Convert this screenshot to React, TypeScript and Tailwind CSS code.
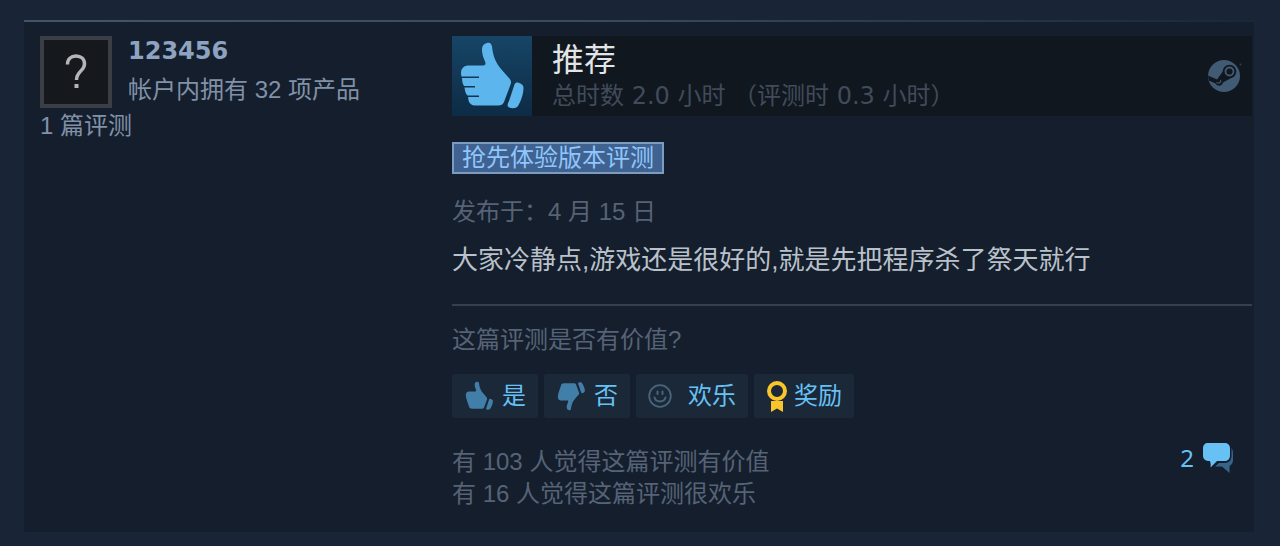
const sans = "font-['Liberation_Sans','Noto_Sans_CJK_SC',sans-serif]";
const wide = "font-['DejaVu_Sans','Noto_Sans_CJK_SC',sans-serif]";
const noto = "font-['Noto_Sans','Noto_Sans_CJK_SC',sans-serif]";

const Thumb = ({ className }: any) => (
  <svg viewBox="6 5 66 70" className={className} fill="currentColor" aria-hidden="true">
    <path d="M34 7C36.5 6 38.5 7.500 39 10.500C39.800 17 41 22.500 45 29C49 35 54 39 57.500 44C58.500 46 58 48 57 50L51 66C50 68.500 48 69.500 45 69.500H23C18.500 69.500 16 67.500 15.500 64L15 61H26V59.500H14.500C12.500 58 11.800 54 11.500 51.500H22V50H11C9.500 48 9.200 45 9 42H26V40.500H8.500C7 35 9 30 15 29.500H30C32.500 29.500 33 28 32 25.500C30 21 28.800 17 29 13C29.200 9.500 31 8 34 7Z" />
    <path d="M63.500 46.500C66 46 70.500 48.500 70.500 51.500C70.500 58 68 65 65 70C63 73 56.500 72.500 55 70.500C54 69.500 55 67 56 65L61 50C61.500 48 62 47 63.500 46.500Z" />
  </svg>
);

// no finger lines at this size
const SmallThumb = ({ className }: any) => (
  <svg viewBox="6 5 66 70" className={className} fill="currentColor" aria-hidden="true">
    <path d="M34 7C36.5 6 38.5 7.500 39 10.500C39.800 17 41 22.500 45 29C49 35 54 39 57.500 44C58.500 46 58 48 57 50L51 66C50 68.500 48 69.500 45 69.500H23C18.500 69.500 16 67.500 15.500 64L12 54L9 44C7 35 9 30 15 29.500H30C32.500 29.500 33 28 32 25.500C30 21 28.800 17 29 13C29.200 9.500 31 8 34 7Z" />
    <path d="M64.500 46.500C66 46 71.500 48.500 71.500 51.500C71.500 58 68 65 65 70C63 73 56.500 72.500 56 70.500C55 69.500 56 67 57 65L62 50C62.500 48 63 47 64.500 46.500Z" />
  </svg>
);

const Steam = () => (
  <svg viewBox="0 0 34 32" className="w-[34px] h-8 mr-[10px]" aria-label="Steam">
    <circle cx="16" cy="16" r="16" fill="#405b73" />
    <path d="M0 15.500L9 19.500L15.500 10.500L24 17.500L15 22.500C14.500 26 9.500 27 7.500 23.500L0.800 20.500Z" fill="#10171f" />
    <circle cx="21.500" cy="11.500" r="6.800" fill="#10171f" />
    <circle cx="21.500" cy="11.500" r="4" fill="none" stroke="#405b73" strokeWidth="1.800" />
    <path d="M8.500 22.500C10.500 24 13.500 22.500 12.500 20" fill="none" stroke="#405b73" strokeWidth="1.200" />
    <circle cx="32.500" cy="4.500" r="1" fill="#2c3e50" />
  </svg>
);

const Smile = () => (
  <svg viewBox="0 0 24 24" className="w-6 h-6 text-[#48647b]" fill="none" stroke="currentColor" strokeWidth="2" strokeLinecap="round" aria-hidden="true">
    <circle cx="12" cy="12" r="10.800" strokeWidth="1.800" />
    <path d="M6.500 13.500C8 18.700 16 18.700 17.500 13.500M9.500 7.500V10M14.500 7.500V10" />
  </svg>
);

const Award = () => (
  <svg viewBox="0 0 22 32" className="w-[22px] h-8 text-[#f9c42c]" fill="currentColor" aria-hidden="true">
    <path d="M5 21H17V32L11 28.500L5 32Z" />
    <circle cx="11" cy="11" r="8" fill="none" stroke="currentColor" strokeWidth="4" />
  </svg>
);

const Comments = () => (
  <svg viewBox="0 0 32 32" className="w-8 h-8" aria-hidden="true">
    <path d="M29.500 6C30.500 7 31 9 31 12V18C31 21 29.500 23 27.500 24V31L20 24.500H13L17 21H23C27 21 29.500 18 29.500 14Z" fill="#37648b" />
    <path d="M6 1H22C26 1 28 3 28 6.500V13C28 17 26 19 22 19H15L8.500 25.500C9 23 8.500 21 8 19C3 19 1 17 1 13V6.500C1 3 3 1 6 1Z" fill="#67c1f5" />
  </svg>
);

const voteButton = "flex items-center h-11 rounded-[2px] bg-[#1b2838] text-2xl text-[#67c1f5] cursor-pointer hover:bg-[#2b4660]";

const Author = () => (
  <aside className={`${sans} w-[412px] shrink-0 text-2xl text-[#8091a8]`}>
    <div className="flex gap-4">
      <div className="flex items-center justify-center size-[72px] border-4 border-[#3b3f45] bg-[#15181d]">
        <svg viewBox="0 0 22 36" className="w-[22px] h-9" fill="none" stroke="#b5b5b8" strokeWidth="3.500" aria-label="头像">
          <path d="M2.500 10.500C2.500 5 6 2 11 2C16 2 19.500 5 19.500 10C19.500 17 11.500 17 11.500 26" strokeLinejoin="round" />
          <path d="M9.500 32H13.500" strokeWidth="4" />
        </svg>
      </div>
      <div className="flex flex-col gap-2">
        <a href="#profile" className={`${wide} font-bold leading-[30px] text-[#8ea3c2]`}>123456</a>
        <a href="#games" className="leading-8">帐户内拥有 32 项产品</a>
      </div>
    </div>
    <a href="#reviews" className="block leading-9">1 篇评测</a>
  </aside>
);

const Header = () => (
  <header className="flex items-center h-20 bg-[#10171f]">
    <div className="flex items-center justify-center size-20 bg-linear-to-b from-[#174566] to-[#0d2b45]">
      <Thumb className="w-[66px] h-[70px] text-[#5db5ee]" />
    </div>
    <div className="flex-1 pl-5">
      <h1 className="text-[32px] leading-10 text-[#e2e4e6]">推荐</h1>
      <p className={`${wide} text-2xl leading-8 text-[#414b5a]`}>总时数 2.0 小时 （评测时 0.3 小时）</p>
    </div>
    <Steam />
  </header>
);

const Votes = () => (
  <div className="flex gap-[6px] mt-[18px]">
    <button type="button" className={`${voteButton} gap-2 px-3`}>
      <SmallThumb className="w-[30px] h-[30px] text-[#417fa9]" />
      <span>是</span>
    </button>
    <button type="button" className={`${voteButton} gap-2 px-3`}>
      <SmallThumb className="w-[30px] h-[30px] -scale-y-100 text-[#417fa9]" />
      <span>否</span>
    </button>
    <button type="button" className={`${voteButton} gap-4 px-3`}>
      <Smile />
      <span>欢乐</span>
    </button>
    <button type="button" className={`${voteButton} gap-[6px] px-3`}>
      <Award />
      <span>奖励</span>
    </button>
  </div>
);

export default function App() {
  return (
    <main className={`${sans} min-h-screen bg-[#192536] pl-6 pr-[26px] pt-5`}>
      <article className="bg-[#151e2c]">
        <div className="h-[2px] bg-linear-to-r from-[#405668] via-[#36495d] to-[#1b2738]" />
        <div className="flex pl-4 pr-[2px] pt-[14px] pb-[22px]">
          <Author />
          <section className="flex-1 min-w-0 text-2xl leading-8 text-[#566377]">
            <Header />
            <div className="flex items-center w-fit h-8 mt-[26px] px-2 border-2 border-[#7b9bc0] bg-[#3f6290] text-[#8fc6fb]">抢先体验版本评测</div>
            <p className="mt-[22px]">发布于：4 月 15 日</p>
            <p className="mt-4 text-[26px] text-[#b9c1ca]">大家冷静点,游戏还是很好的,就是先把程序杀了祭天就行</p>
            <hr className="mt-7 border-t-2 border-[#363f4d]" />
            <p className="mt-[18px]">这篇评测是否有价值?</p>
            <Votes />
            <div className="flex justify-between mt-7 pr-[18px]">
              <div>
                <p>有 103 人觉得这篇评测有价值</p>
                <p>有 16 人觉得这篇评测很欢乐</p>
              </div>
              <a href="#comments" className={`${noto} flex items-center gap-2 h-6 text-[#67c1f5]`}>
                <span>2</span>
                <Comments />
              </a>
            </div>
          </section>
        </div>
      </article>
    </main>
  );
}
